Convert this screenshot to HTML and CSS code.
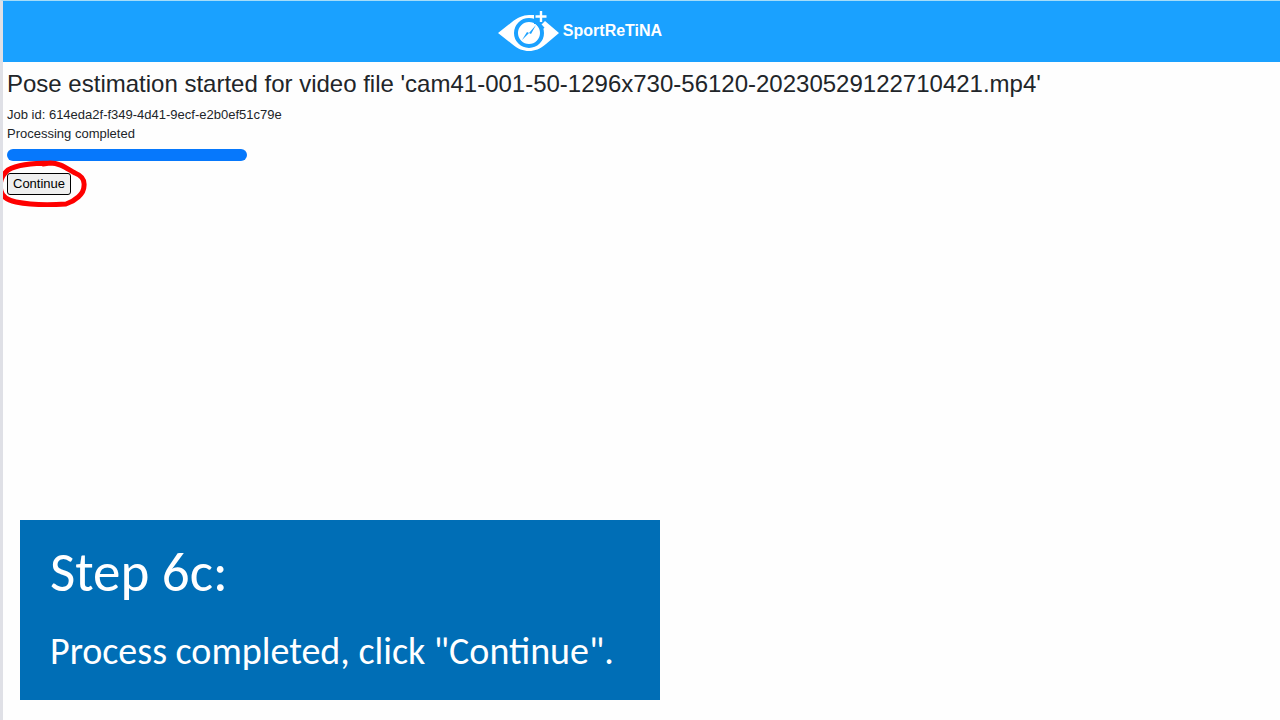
FILE: index.html
```
<!DOCTYPE html>
<html lang="en">
<head>
    <meta charset="UTF-8">
    <meta name="viewport" content="width=device-width, initial-scale=1.0">
    <title>SportReTiNA</title>
    <link rel="stylesheet" href="styles.css">
</head>
<body>

    <header class="navbar">
        <a class="brand" href="#">
            <svg class="logo" viewBox="0 0 62 40" aria-hidden="true">
                <!-- eye, open at the top right for the plus -->
                <path fill="#fff" d="M0 22L14 11C19 7 25 4 31 4h5v9h8l3-3 14 12-13 11C42 38 37 40 31 40S20 38 14 33z"/>
                <circle cx="31" cy="22" r="13" fill="none" stroke="#1aa1ff" stroke-width="4"/>
                <path fill="none" stroke="#1aa1ff" stroke-width="4" d="M38 10l7 8"/>
                <path fill="#1aa1ff" d="M24 29l5-8 2 1 7-8-5 9-2-1z"/>
                <path fill="none" stroke="#fff" stroke-width="2.4" d="M43 0v11M37.500 5.500h11"/>
            </svg>
            <span>SportReTiNA</span>
        </a>
    </header>

    <main class="content">
        <h1>Pose estimation started for video file 'cam41-001-50-1296x730-56120-20230529122710421.mp4'</h1>
        <p>Job id: 614eda2f-f349-4d41-9ecf-e2b0ef51c79e</p>
        <p id="status">Processing completed</p>
        <progress class="progress" value="100" max="100" aria-labelledby="status"></progress>
        <div class="action">
            <button type="button">Continue</button>
            <svg class="marker" viewBox="0 0 90 50" aria-hidden="true">
                <path d="M50 4C34 4 17 6 8 11C2 16 -1 24 1 32C2 37 7 41 16 43C31 46 50 46 66 45C75 42 84 35 84 27C85 19 80 16 75 14C66 9 60 4 50 4L43 5"/>
            </svg>
        </div>
    </main>

    <aside class="caption">
        <h2>Step 6c:</h2>
        <p>Process completed, click "Continue".</p>
    </aside>

</body>
</html>
```
FILE: styles.css
```
* {
    margin: 0;
    padding: 0;
    box-sizing: border-box;
}

body {
    min-height: 100vh;
    border-left: 3px solid #dfe0e6;
    border-top: 1px solid #a5dcf8;
    background: #fefefe;
    color: #212529;
    font-family: "Liberation Sans", Arial, sans-serif;
    font-size: 13px;
    line-height: 19px;
}

.navbar {
    display: flex;
    justify-content: center;
    padding: 10px 123px 11px 0;
    background: #1aa1ff;
}

.brand {
    display: flex;
    gap: 3px;
    color: #fff;
    font-size: 16px;
    font-weight: bold;
    line-height: 40px;
    text-decoration: none;
}

.logo {
    width: 62px;
    height: 40px;
}

.content {
    padding: 7px 4px;
}

.content h1 {
    margin-bottom: 7px;
    font-size: 24px;
    font-weight: normal;
    line-height: 29px;
}

.progress {
    display: block;
    width: 240px;
    height: 12px;
    margin: 6px 0 12px;
    border: none;
    border-radius: 6px;
    overflow: hidden;
    appearance: none;
}

.progress::-webkit-progress-bar {
    background: #e9ecef;
}

.progress::-webkit-progress-value {
    background: #0678fc;
}

.action {
    position: relative;
    display: flex;
}

button {
    padding: 0 5px;
    border: 1px solid #000;
    border-radius: 3px;
    background: #efefef;
    color: #000;
    font: inherit;
    line-height: 20px;
    cursor: pointer;
}

/* hand-drawn ring round the button */
.marker {
    position: absolute;
    left: -7px;
    top: -14px;
    width: 90px;
    height: 50px;
    overflow: visible;
    pointer-events: none;
}

.marker path {
    fill: none;
    stroke: #fe0000;
    stroke-width: 5;
    stroke-linecap: round;
    stroke-linejoin: round;
}

/* caption laid over the page */
.caption {
    position: fixed;
    left: 20px;
    bottom: 20px;
    min-width: 50%;
    padding: 20px 30px;
    background: #006eb6;
    color: #fff;
    font-family: Carlito, Lato, sans-serif;
}

.caption h2 {
    margin-bottom: 16px;
    font-size: 55px;
    font-weight: normal;
    line-height: 66px;
}

.caption p {
    font-size: 38px;
    line-height: 58px;
}
```
